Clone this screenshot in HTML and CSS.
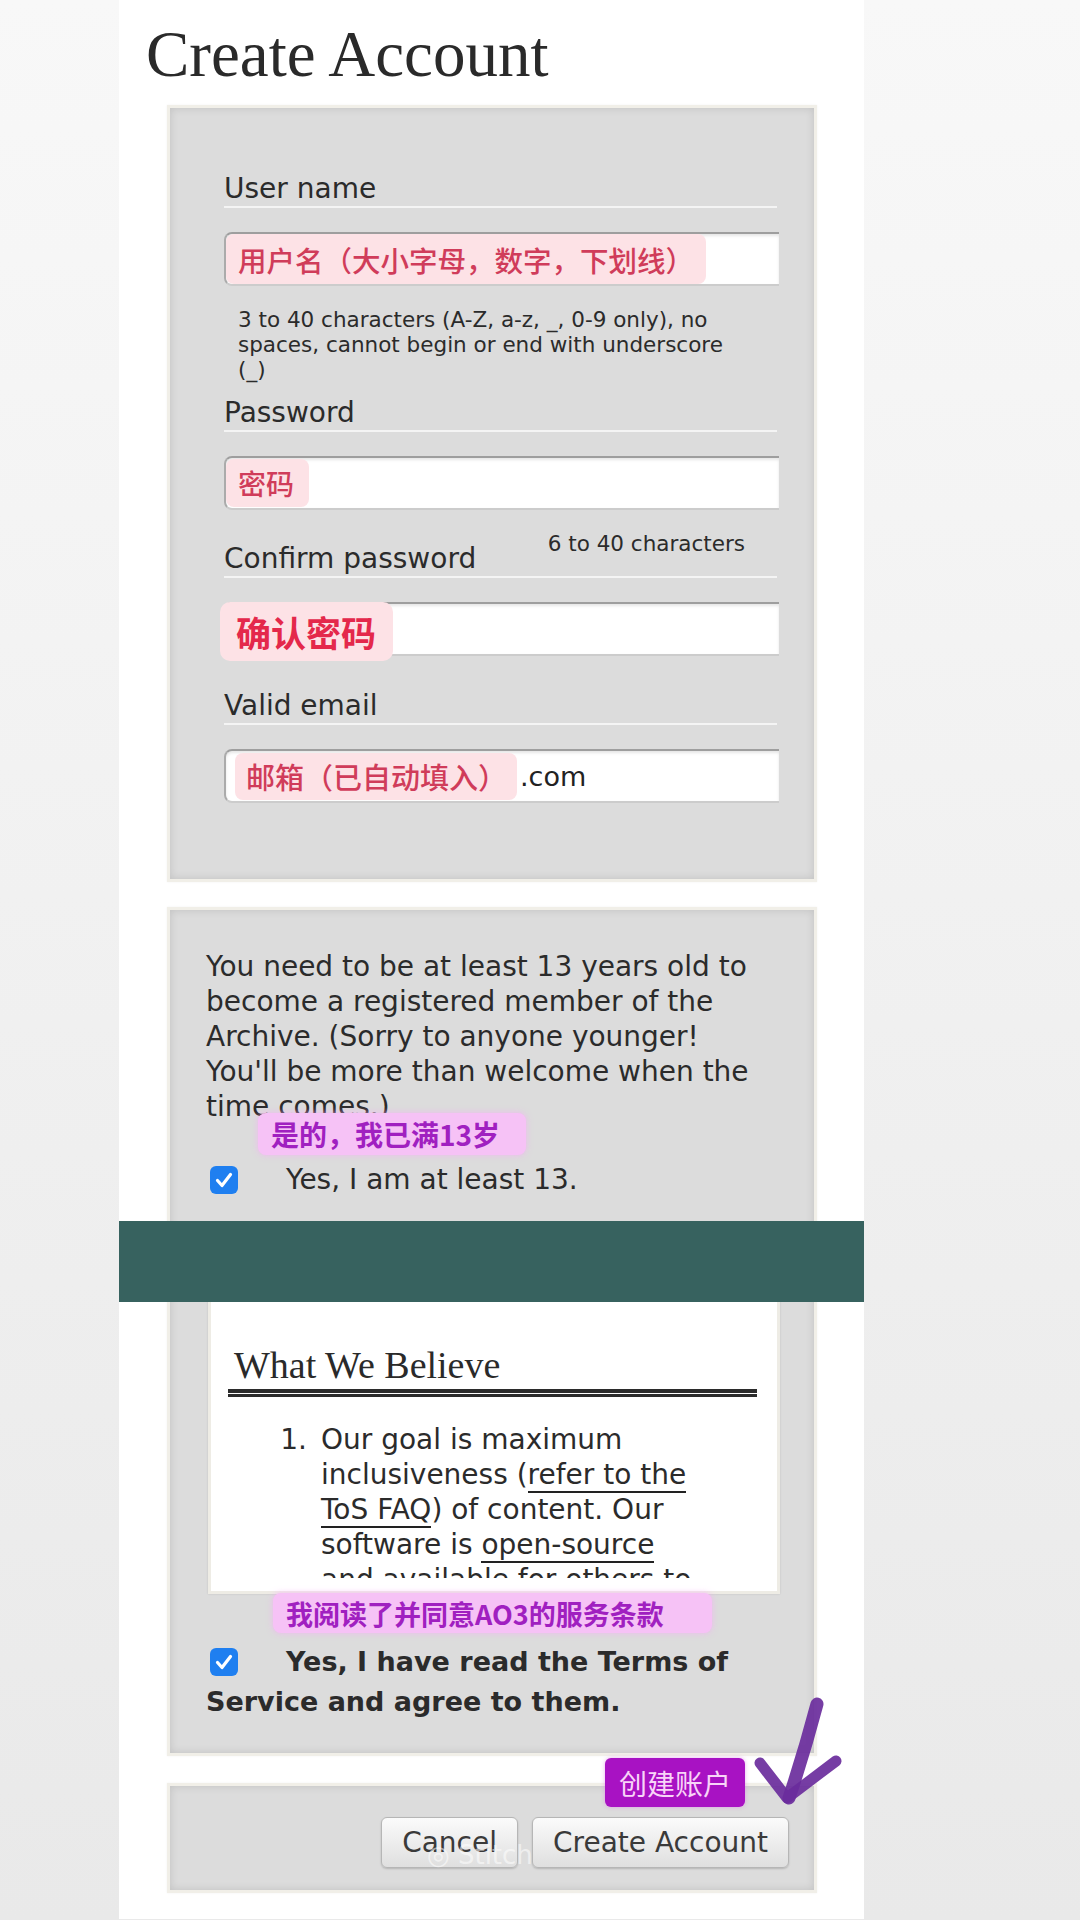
FILE: index.html
```html
<!DOCTYPE html>
<html lang="en">
<head>
<meta charset="utf-8">
<title>Create Account</title>
<link rel="stylesheet" href="styles.css">
</head>
<body>
<div class="page">
  <h1 class="title">Create Account</h1>

  <div class="panel panel-fields">
    <div class="label">User name</div>
    <div class="input"><span class="hl hl-user">用户名（大小字母，数字，下划线）</span></div>
    <p class="hint">3 to 40 characters (A-Z, a-z, _, 0-9 only), no spaces, cannot begin or end with underscore (_)</p>

    <div class="label label-pw">Password</div>
    <div class="input"><span class="hl hl-pw">密码</span></div>
    <p class="hint hint-float">6 to 40 characters</p>

    <div class="label label-cf">Confirm password</div>
    <div class="input"><span class="hl hl-cf">确认密码</span></div>

    <div class="label label-em">Valid email</div>
    <div class="input"><span class="hl hl-em">邮箱（已自动填入）</span><span class="input-text">.com</span></div>
  </div>

  <div class="panel panel-terms">
    <p class="age-text">You need to be at least 13 years old to become a registered member of the Archive. (Sorry to anyone younger! You'll be more than welcome when the time comes.)</p>
    <div class="check-row">
      <svg class="cb" viewBox="0 0 28 28"><rect width="28" height="28" rx="6" fill="#1f7ff0"/><path d="M7.5 14.5 L12 19.5 L20.5 8.5" fill="none" stroke="#fff" stroke-width="3.2" stroke-linecap="round" stroke-linejoin="round"/></svg>
      <span>Yes, I am at least 13.</span>
    </div>

    <div class="tos-box">
      <div class="tos-scroll">
        <h2 class="tos-title">What We Believe</h2>
        <ol class="tos-list">
          <li>Our goal is maximum inclusiveness (<a href="#">refer to the ToS FAQ</a>) of content. Our software is <a href="#">open-source</a> and available for others to use and adapt. We welcome contributions from fans.</li>
        </ol>
      </div>
    </div>

    <p class="tos-agree"><svg class="cb cb-inline" viewBox="0 0 28 28"><rect width="28" height="28" rx="6" fill="#1f7ff0"/><path d="M7.5 14.5 L12 19.5 L20.5 8.5" fill="none" stroke="#fff" stroke-width="3.2" stroke-linecap="round" stroke-linejoin="round"/></svg>Yes, I have read the Terms of Service and agree to them.</p>
  </div>

  <div class="panel panel-actions">
    <button class="btn" type="button">Cancel</button>
    <button class="btn" type="button">Create Account</button>
  </div>

  <div class="sticky-bar"></div>

  <div class="note note-age">是的，我已满13岁</div>
  <div class="note note-tos">我阅读了并同意AO3的服务条款</div>
  <div class="note-create">创建账户</div>
  <svg class="scribble" viewBox="0 0 110 120">
    <path d="M20 68 L47 103 L96 66" fill="none" stroke="#6a2c9c" stroke-opacity="0.92" stroke-width="11" stroke-linecap="round" stroke-linejoin="round"/>
    <path d="M77 9 Q64 58 49 103" fill="none" stroke="#6a2c9c" stroke-opacity="0.92" stroke-width="13" stroke-linecap="round"/>
  </svg>
  <div class="watermark">◎ Stitch</div>
</div>
</body>
</html>
```

FILE: styles.css
```css
html, body {
  margin: 0;
  padding: 0;
}

body {
  min-height: 1920px;
  background: linear-gradient(#f8f8f8, #e9e9e9);
  font-family: "DejaVu Sans", "Noto Sans CJK SC", sans-serif;
  color: #2b2b2b;
}

.page {
  position: relative;
  margin-left: 119px;
  width: 745px;
  background: #ffffff;
  padding: 0 0 26px;
}

.title {
  margin: 0;
  padding: 22px 0 0 27px;
  font: 400 65px/64px "Liberation Serif", serif;
  color: #2a2a2a;
}

.panel {
  box-sizing: border-box;
  width: 650px;
  margin-left: 48px;
  border: 3px solid #f1efe8;
  background: #dcdcdc;
  box-shadow: inset 0 0 8px rgba(0, 0, 0, 0.13), 0 0 2px rgba(0, 0, 0, 0.06);
}

/* ---------- fields ---------- */
.panel-fields {
  margin-top: 19px;
  padding: 64px 37px 76px 54px;
}

.label {
  font-size: 28px;
  line-height: 34px;
  border-bottom: 2px solid #f4f4f4;
  color: #2b2b2b;
}

.label-pw { margin-top: 14px; }
.label-cf { margin-top: 32px; }
.label-em { margin-top: 33px; }

.input {
  box-sizing: border-box;
  height: 54px;
  margin: 24px -2px 0 0;
  display: flex;
  align-items: center;
  background: #ffffff;
  border-top: 2px solid #9e9e9e;
  border-left: 2px solid #ababab;
  border-bottom: 2px solid #cccccc;
  border-radius: 8px 0 0 8px;
  box-shadow: inset 0 2px 3px rgba(0, 0, 0, 0.1);
}

.hl {
  display: flex;
  align-items: center;
  box-sizing: border-box;
  background: #fde2e6;
  color: #d03c5a;
  font-family: "Noto Sans CJK SC", sans-serif;
  font-weight: 500;
  border-radius: 8px;
  white-space: nowrap;
}

.hl-user {
  height: 50px;
  font-size: 28.5px;
  padding: 0 12px;
}

.hl-pw {
  height: 48px;
  font-size: 28px;
  padding: 0 15px 0 12px;
}

.hl-cf {
  align-self: flex-start;
  height: 59px;
  margin: -2px 0 0 -6px;
  padding: 0 17px 0 16px;
  font-size: 35px;
  font-weight: 700;
  color: #e4284b;
  border-radius: 10px;
}

.hl-em {
  height: 47px;
  margin-left: 9px;
  padding: 0 10px 0 11px;
  font-size: 29px;
}

.input-text {
  font-size: 27px;
  color: #222;
  margin-left: 3px;
}

.hint {
  margin: 21px 0 0;
  padding-left: 14px;
  width: 490px;
  font-size: 21.5px;
  line-height: 25px;
  color: #2b2b2b;
}

.hint-float {
  float: right;
  width: auto;
  padding-left: 0;
  margin: 21px 32px 0 0;
}

/* ---------- terms ---------- */
.panel-terms {
  margin-top: 25px;
  padding: 39px 48px 31px 36px;
}

.age-text {
  margin: 0;
  font-size: 28px;
  line-height: 35px;
}

.check-row {
  display: flex;
  align-items: center;
  margin-top: 38px;
  font-size: 28px;
  line-height: 35px;
}

.cb {
  flex: none;
  width: 28px;
  height: 28px;
  margin: 0 48px 0 4px;
}

.tos-box {
  box-sizing: border-box;
  width: 572px;
  margin: 30px 0 0 2px;
  padding-bottom: 13px;
  background: #ffffff;
  border: 3px solid #eeece5;
  box-shadow: 0 0 2px rgba(0, 0, 0, 0.12);
}

.tos-scroll {
  height: 348px;
  overflow: hidden;
  padding-top: 113px;
  box-sizing: border-box;
}

.tos-title {
  margin: 0 20px 0 17px;
  padding-left: 6px;
  font: 400 38px/45.6px "Liberation Serif", serif;
  color: #2a2a2a;
  border-bottom: 4px solid #2b2b2b;
  box-shadow: 0 1px 0 #ffffff, 0 4px 0 #2b2b2b;
}

.tos-list {
  margin: 29px 0 0;
  padding-left: 110px;
  width: 380px;
  font-size: 28px;
  line-height: 35px;
  color: #2b2b2b;
}

.tos-list li::marker {
  content: counter(list-item) ".\2002";
}

.tos-list a {
  color: #2b2b2b;
  text-decoration: none;
  border-bottom: 2px solid #222;
}

.tos-agree {
  margin: 48px 0 0;
  font-size: 27px;
  font-weight: 700;
  line-height: 40px;
  color: #2b2b2b;
}

.cb-inline {
  display: inline-block;
  vertical-align: middle;
  margin: -4px 48px 0 4px;
}

/* ---------- actions ---------- */
.panel-actions {
  margin-top: 27px;
  padding: 31px 25px 22px;
  display: flex;
  justify-content: flex-end;
  gap: 14px;
}

.btn {
  height: 51px;
  padding: 0 20px;
  font-family: "DejaVu Sans", sans-serif;
  font-size: 28px;
  color: #3a3a3a;
  background: linear-gradient(#fbfbfb, #dfdfdf);
  border: 1px solid #b6b6b6;
  border-radius: 6px;
  box-shadow: 0 1px 2px rgba(0, 0, 0, 0.18);
}

/* ---------- overlays ---------- */
.sticky-bar {
  position: absolute;
  left: 0;
  top: 1221px;
  width: 745px;
  height: 81px;
  background: #37625f;
}

.note {
  position: absolute;
  box-sizing: border-box;
  display: flex;
  align-items: center;
  padding-left: 13px;
  background: #f6c2f6;
  color: #a020c0;
  font-family: "Noto Sans CJK SC", sans-serif;
  font-weight: 700;
  border-radius: 8px;
  box-shadow: 0 0 6px rgba(246, 170, 246, 0.7);
  white-space: nowrap;
}

.note-age {
  left: 139px;
  top: 1113px;
  width: 268px;
  height: 42px;
  font-size: 28px;
}

.note-tos {
  left: 154px;
  top: 1593px;
  width: 439px;
  height: 40px;
  font-size: 27px;
}

.note-create {
  position: absolute;
  left: 486px;
  top: 1758px;
  width: 140px;
  height: 49px;
  box-sizing: border-box;
  display: flex;
  align-items: center;
  justify-content: center;
  background: #a812c3;
  color: #f8d4f8;
  font-family: "Noto Sans CJK SC", sans-serif;
  font-size: 28px;
  border-radius: 6px;
  box-shadow: 0 0 4px rgba(220, 120, 230, 0.6);
}

.scribble {
  position: absolute;
  left: 621px;
  top: 1695px;
  width: 110px;
  height: 120px;
}

.watermark {
  position: absolute;
  left: 308px;
  top: 1840px;
  font-size: 26px;
  color: rgba(255, 255, 255, 0.55);
}
```
